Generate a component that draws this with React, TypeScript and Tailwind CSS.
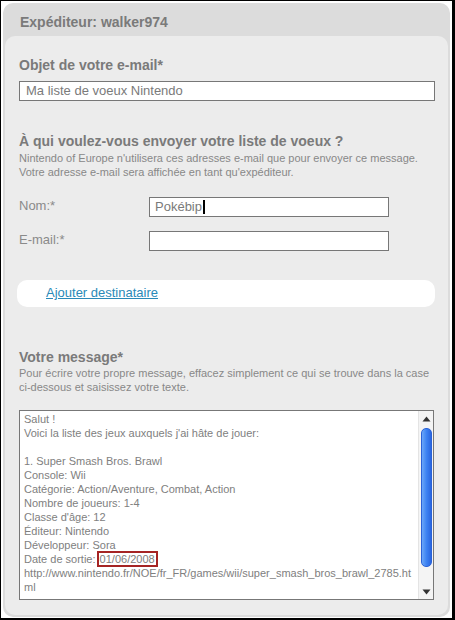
export default function App() {
  const lines: (string | null)[] = [
    "Salut !",
    "Voici la liste des jeux auxquels j'ai hâte de jouer:",
    "",
    "1. Super Smash Bros. Brawl",
    "Console: Wii",
    "Catégorie: Action/Aventure, Combat, Action",
    "Nombre de joueurs: 1-4",
    "Classe d'âge: 12",
    "Éditeur: Nintendo",
    "Développeur: Sora",
    null,
    "http://www.nintendo.fr/NOE/fr_FR/games/wii/super_smash_bros_brawl_2785.ht",
    "ml",
  ];

  return (
    <div className="w-[455px] h-[620px] border-t border-l border-r-[3px] border-b-2 border-black bg-white pt-[2px] pl-[2px] pr-[2px] pb-[1px] font-['Liberation_Sans',Arial,sans-serif] text-[#777]">
      <div className="h-full rounded-[10px] bg-[#dcdcdc] flex flex-col">
        <div className="h-[33px] pl-[17px] pt-[11px] text-[14px] leading-[16px] font-bold text-[#7a7a7a]">
          Expéditeur: walker974
        </div>
        <div className="flex-1 mx-[2px] mb-[2px] rounded-[10px] bg-[#ececec] pl-[14px] pr-[13px] pt-[21px]">
          <h2 className="text-[14px] leading-[16px] font-bold text-[#7a7a7a]">Objet de votre e-mail*</h2>
          <div className="mt-[8px] h-[20px] border border-[#777] bg-white pl-[6px] text-[13px] leading-[18px] text-[#7a7a7a]">
            Ma liste de voeux Nintendo
          </div>

          <h2 className="mt-[32px] text-[14px] leading-[16px] font-bold text-[#7a7a7a]">
            À qui voulez-vous envoyer votre liste de voeux ?
          </h2>
          <p className="mt-[2px] text-[11px] leading-[14px] text-[#888]">
            Nintendo of Europe n'utilisera ces adresses e-mail que pour envoyer ce message.
            <br />
            Votre adresse e-mail sera affichée en tant qu'expéditeur.
          </p>

          <div className="mt-[18px] flex items-start">
            <span className="w-[130px] pt-[1px] text-[13px] leading-[16px] text-[#8a8a8a]">Nom:*</span>
            <div className="w-[240px] h-[20px] border border-[#777] bg-white pl-[5px] text-[13px] leading-[18px] text-[#7a7a7a] flex items-center">
              Pokébip<span className="ml-[1px] w-[2px] h-[14px] bg-black" />
            </div>
          </div>
          <div className="mt-[14px] flex items-start">
            <span className="w-[130px] pt-[1px] text-[13px] leading-[16px] text-[#8a8a8a]">E-mail:*</span>
            <div className="w-[240px] h-[20px] border border-[#777] bg-white" />
          </div>

          <div className="mt-[29px] -ml-[2px] h-[27px] rounded-[10px] bg-white pl-[29px] text-[13px] leading-[26px]">
            <a href="#" className="text-[#2a8ab8] underline">Ajouter destinataire</a>
          </div>

          <h2 className="mt-[42px] text-[14px] leading-[16px] font-bold text-[#7a7a7a]">Votre message*</h2>
          <p className="mt-[1px] text-[11px] leading-[14px] text-[#888]">
            Pour écrire votre propre message, effacez simplement ce qui se trouve dans la case
            <br />
            ci-dessous et saisissez votre texte.
          </p>

          <div className="mt-[16px] w-[415px] h-[190px] border border-[#777] bg-white flex">
            <div className="flex-1 pl-[4px] pt-[1px] text-[11px] leading-[14px] text-[#808080] whitespace-pre overflow-hidden">
              {lines.map((l, i) =>
                l === null ? (
                  <div key={i} className="h-[14px]">
                    Date de sortie:{" "}
                    <span className="-ml-[2px] px-[1px] border-2 border-[#a52424]">01/06/2008</span>
                  </div>
                ) : (
                  <div key={i} className="h-[14px]">{l}</div>
                )
              )}
            </div>
            <div className="w-[15px] bg-[#f4f4f4] border-l border-[#e4e4e4] flex flex-col items-center">
              <div className="h-[15px] flex items-center justify-center">
                <svg width="9" height="6" viewBox="0 0 9 6">
                  <path d="M4.5 0.5 L8.5 5.5 L0.5 5.5 Z" fill="#333" />
                </svg>
              </div>
              <div className="mt-[2px] w-[11px] h-[139px] rounded-[5px] border border-[#2a62d8] bg-gradient-to-r from-[#6aa6f8] via-[#3d82f2] to-[#2a66e0]" />
              <div className="flex-1" />
              <div className="h-[15px] flex items-center justify-center">
                <svg width="9" height="6" viewBox="0 0 9 6">
                  <path d="M0.5 0.5 L8.5 0.5 L4.5 5.5 Z" fill="#333" />
                </svg>
              </div>
            </div>
          </div>
        </div>
      </div>
    </div>
  );
}
